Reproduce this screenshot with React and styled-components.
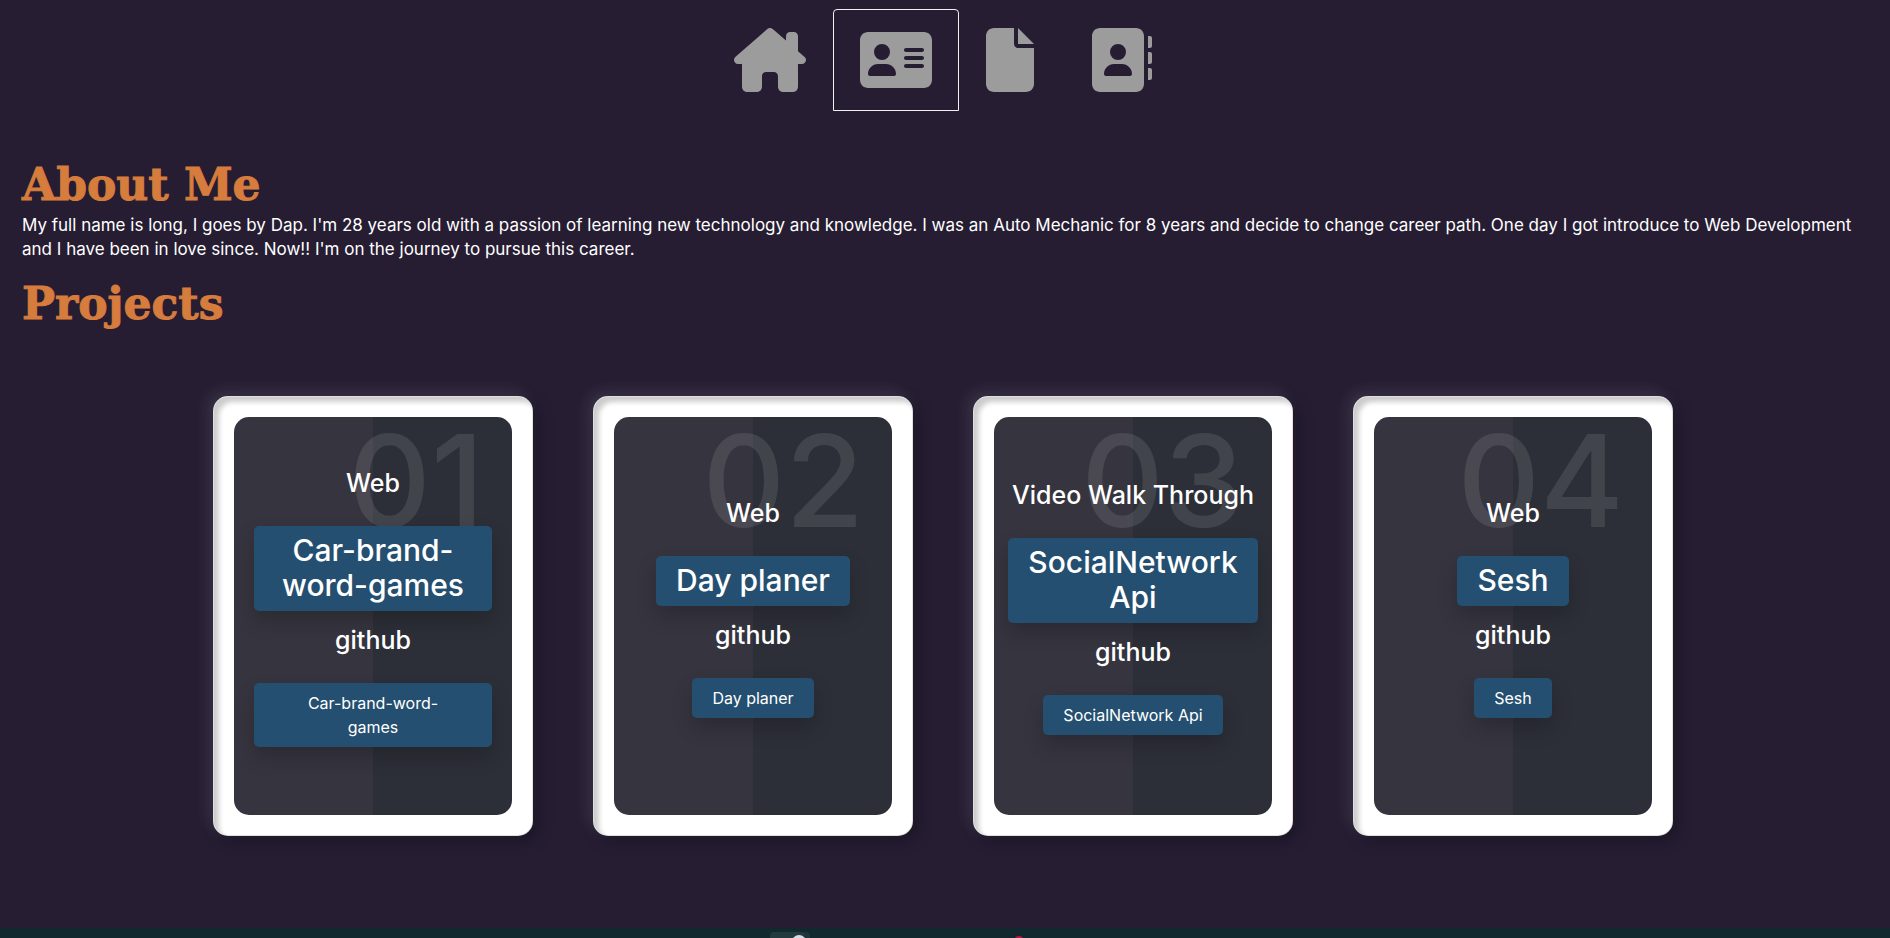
import React from "react";
import styled, { createGlobalStyle } from "styled-components";
import { FaHouseChimney, FaAddressCard, FaFile } from "react-icons/fa6";

const GlobalStyle = createGlobalStyle`
  *, *::before, *::after { box-sizing: border-box; }
  body {
    margin: 0;
    background: #261d33;
    color: #fff;
    font: 400 16px/24px Inter, "Open Sans", sans-serif;
  }
  h1, h2, h3, p { margin: 0; }
`;

const Page = styled.div`
  min-height: 100vh;
  display: flex;
  flex-direction: column;
`;

const Nav = styled.nav`
  display: flex;
  justify-content: center;
  padding: 9px 4px 0 0;
`;

const Tab = styled.a`
  display: flex;
  padding: 18px 26px;
  border: 1px solid ${(p) => (p.$active ? "#f1f1f4" : "transparent")};
  border-radius: 4px 4px 0 0;
  color: #9c9c9c;

  svg { display: block; width: ${(p) => p.$iconWidth}px; height: 64px; }
`;

const About = styled.main`
  flex: 1;
  padding: 47px 22px 0;
`;

const Heading = styled.h1`
  color: #d67c3c;
  font: 700 44px/54px "DejaVu Serif", serif;
  -webkit-text-stroke: 1px #d67c3c;
`;

const Bio = styled.p`
  margin: 1px 0 16px;
  font-size: 17px;
`;

const Cards = styled.section`
  display: flex;
  flex-wrap: wrap;
  justify-content: center;
  gap: 60px;
  padding: 65px 4px 92px 0;
`;

const Card = styled.article`
  display: flex;
  width: 320px;
  min-height: 440px;
  padding: 20px;
  border: 1px solid rgba(0, 0, 0, 0.12);
  border-radius: 15px;
  background: #fff;
  box-shadow:
    inset 5px 5px 5px rgba(0, 0, 0, 0.2),
    5px 5px 15px rgba(0, 0, 0, 0.3),
    -5px -5px 15px rgba(255, 255, 255, 0.1);
`;

const Panel = styled.div`
  position: relative;
  flex: 1;
  display: flex;
  align-items: center;
  justify-content: center;
  padding-bottom: 16px;
  border-radius: 15px;
  background: linear-gradient(90deg, #36353f 50%, #2d2f38 50%);
`;

const Numeral = styled.span`
  position: absolute;
  top: 0;
  right: 28px;
  color: rgba(255, 255, 255, 0.1);
  font-size: 128px;
  font-weight: 500;
  line-height: 128px;
`;

const Content = styled.div`
  position: relative;
  width: 238px;
  min-width: min-content;
  display: flex;
  flex-direction: column;
  align-items: center;
  text-align: center;
`;

const Label = styled.h3`
  margin-bottom: 28px;
  font-size: 25px;
  font-weight: 500;
  line-height: 29px;
  white-space: nowrap;
`;

const ProjectLink = styled.a`
  width: ${(p) => (p.$wide ? "100%" : "auto")};
  padding: 8px 20px;
  border-radius: 5px;
  background: #244f70;
  box-shadow: 0 10px 20px rgba(0, 0, 0, 0.2);
  color: #fff;
  text-decoration: none;
  white-space: pre-line;
`;

const TitleLink = styled(ProjectLink)`
  margin-bottom: 15px;
  padding: 7px 20px 8px;
  font-size: 30px;
  font-weight: 500;
  line-height: 35px;
`;

const Strip = styled.footer`
  height: 10px;
  background: #11292e;

  svg { display: block; margin: 0 auto; }
`;

const ContactIcon = () => (
  <svg viewBox="0 0 512 512" fill="currentColor" aria-hidden="true">
    <path
      fillRule="evenodd"
      d="M96 0C60.7 0 32 28.7 32 64v384c0 35.3 28.7 64 64 64h288c35.3 0 64-28.7 64-64V64c0-35.3-28.7-64-64-64H96zM240 128a64 64 0 1 1 0 128 64 64 0 1 1 0-128zM208 288h64c44.200 0 80 35.800 80 80 0 8.800-7.200 16-16 16H144c-8.800 0-16-7.200-16-16 0-44.200 35.800-80 80-80z"
    />
    <path d="M480 64h16c8.800 0 16 7.200 16 16v64c0 8.800-7.200 16-16 16h-16zM480 192h16c8.800 0 16 7.200 16 16v64c0 8.800-7.200 16-16 16h-16zM480 320h16c8.800 0 16 7.200 16 16v64c0 8.800-7.200 16-16 16h-16z" />
  </svg>
);

const tabs = [
  { name: "Home", icon: FaHouseChimney, width: 72 },
  { name: "About", icon: FaAddressCard, width: 72, active: true },
  { name: "Resume", icon: FaFile, width: 48 },
  { name: "Contact", icon: ContactIcon, width: 64 },
];

const projects = [
  { number: "01", label: "Web", name: "Car-brand-word-games", repo: "Car-brand-word-\ngames", wide: true },
  { number: "02", label: "Web", name: "Day planer" },
  { number: "03", label: "Video Walk Through", name: "SocialNetwork Api" },
  { number: "04", label: "Web", name: "Sesh" },
];

export default function App() {
  return (
    <Page>
      <GlobalStyle />
      <Nav>
        {tabs.map(({ name, icon: Icon, width, active }) => (
          <Tab
            key={name}
            href={`#${name.toLowerCase()}`}
            $active={active}
            $iconWidth={width}
            aria-label={name}
          >
            <Icon />
          </Tab>
        ))}
      </Nav>
      <About>
        <Heading>About Me</Heading>
        <Bio>
          My full name is long, I goes by Dap. I'm 28 years old with a passion of learning new
          technology and knowledge. I was an Auto Mechanic for 8 years and decide to change career
          path. One day I got introduce to Web Development and I have been in love since. Now!! I'm
          on the journey to pursue this career.
        </Bio>
        <Heading as="h2">Projects</Heading>
        <Cards>
          {projects.map((p) => (
            <Card key={p.number}>
              <Panel>
                <Numeral>{p.number}</Numeral>
                <Content>
                  <Label>{p.label}</Label>
                  <TitleLink href="#web">{p.name}</TitleLink>
                  <Label>github</Label>
                  <ProjectLink href="#github" $wide={p.wide}>{p.repo || p.name}</ProjectLink>
                </Content>
              </Panel>
            </Card>
          ))}
        </Cards>
      </About>
      <Strip>
        <svg width="350" height="10" viewBox="0 0 350 10" aria-hidden="true">
          <rect x="1" y="4" width="39" height="12" rx="4" fill="#1d3439" />
          <rect x="0" y="4" width="35" height="12" rx="4" fill="#22393e" />
          <circle cx="29" cy="14" r="7" fill="#d5dce6" />
          <circle cx="249" cy="13" r="5" fill="#c2143f" />
        </svg>
      </Strip>
    </Page>
  );
}
